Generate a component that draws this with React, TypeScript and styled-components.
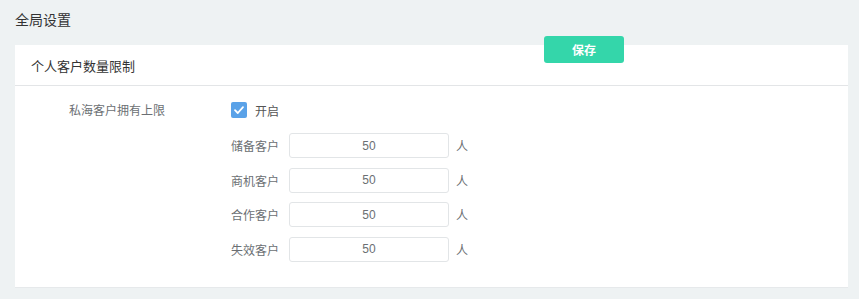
import styled, { createGlobalStyle } from "styled-components";

const GlobalStyle = createGlobalStyle`
  html, body {
    margin: 0;
    padding: 0;
    background: #eef2f3;
  }
  body {
    font-family: "Noto Sans CJK SC", "Noto Sans", sans-serif;
    color: #333;
  }
`;

const limits = [
  { label: "储备客户", value: "50" },
  { label: "商机客户", value: "50" },
  { label: "合作客户", value: "50" },
  { label: "失效客户", value: "50" },
];

const App = () => {
  return (
    <Page>
      <GlobalStyle />
      <PageTitle>全局设置</PageTitle>
      <SaveButton>保存</SaveButton>
      <Card>
        <CardHeader>个人客户数量限制</CardHeader>
        <CardBody>
          <FieldLabel>私海客户拥有上限</FieldLabel>
          <FieldControls>
            <CheckRow>
              <CheckBox>
                <svg width="12" height="12" viewBox="0 0 12 12">
                  <path d="M2 6.2 L4.8 9 L10 3.2" fill="none" stroke="#fff" strokeWidth="1.8" strokeLinecap="round" strokeLinejoin="round" />
                </svg>
              </CheckBox>
              <CheckText>开启</CheckText>
            </CheckRow>
            {limits.map((item) => (
              <LimitRow key={item.label}>
                <LimitLabel>{item.label}</LimitLabel>
                <NumberInput defaultValue={item.value} />
                <Unit>人</Unit>
              </LimitRow>
            ))}
          </FieldControls>
        </CardBody>
      </Card>
    </Page>
  );
};

export default App;

const Page = styled.div`
  position: relative;
  width: 859px;
  height: 299px;
  padding: 0 11px 0 15px;
  box-sizing: border-box;
  background: #eef2f3;
`;

const PageTitle = styled.div`
  height: 45px;
  padding-top: 10px;
  box-sizing: border-box;
  font-size: 14px;
  line-height: 18px;
  color: #333;
`;

const SaveButton = styled.button`
  position: absolute;
  left: 544px;
  top: 36px;
  width: 80px;
  height: 27px;
  border: none;
  border-radius: 3px;
  background: #34d6aa;
  color: #fff;
  font-family: "Noto Sans CJK SC", sans-serif;
  font-size: 12px;
  font-weight: 700;
  padding: 0;
  z-index: 1;
`;

const Card = styled.div`
  background: #fff;
  border-bottom: 1px solid #e6e9eb;
`;

const CardHeader = styled.div`
  height: 40px;
  padding-left: 16px;
  display: flex;
  align-items: center;
  font-size: 13px;
  color: #333;
  border-bottom: 1px solid #e3e5e7;
`;

const CardBody = styled.div`
  display: flex;
  padding: 16px 0 25px 54px;
`;

const FieldLabel = styled.div`
  width: 162px;
  font-size: 12px;
  line-height: 16px;
  color: #6b6f73;
`;

const FieldControls = styled.div`
  display: flex;
  flex-direction: column;
  gap: 9.5px;
`;

const CheckRow = styled.div`
  display: flex;
  align-items: center;
  height: 16px;
  margin-bottom: 5.5px;
`;

const CheckBox = styled.span`
  width: 16px;
  height: 16px;
  border-radius: 2px;
  background: #5aa2e8;
  display: flex;
  align-items: center;
  justify-content: center;
`;

const CheckText = styled.span`
  margin-left: 8px;
  font-size: 12px;
  color: #555;
`;

const LimitRow = styled.div`
  display: flex;
  align-items: center;
  height: 25px;
`;

const LimitLabel = styled.span`
  width: 48px;
  text-align: right;
  font-size: 12px;
  color: #6b6f73;
`;

const NumberInput = styled.input`
  margin-left: 10px;
  width: 160px;
  height: 25px;
  box-sizing: border-box;
  border: 1px solid #e2e5e7;
  border-radius: 3px;
  text-align: center;
  font-family: "Liberation Sans", "Noto Sans CJK SC", sans-serif;
  font-size: 12px;
  color: #6b6f73;
  outline: none;
  padding: 0;
`;

const Unit = styled.span`
  margin-left: 7px;
  font-size: 12px;
  color: #6b6f73;
`;
